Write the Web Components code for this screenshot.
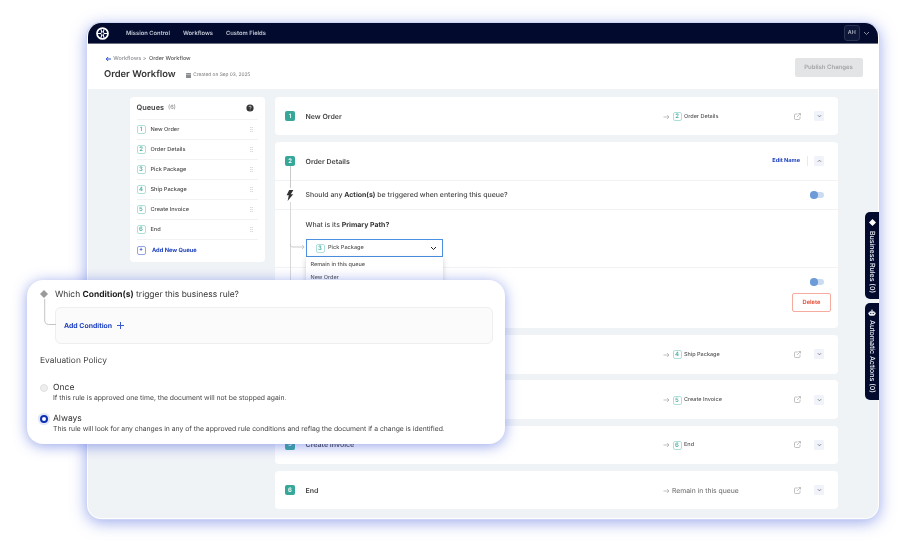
<!DOCTYPE html>
<html>
<head>
<meta charset="utf-8">
<style>
  html, body { margin: 0; background: #fff; }
  body { width: 900px; height: 547px; overflow: hidden; position: relative; font-family: Inter, "Liberation Sans", sans-serif; text-rendering: geometricPrecision; }
  app-window, side-tabs, rule-popup { filter: blur(.25px); will-change: transform; }
</style>
</head>
<body>
<app-window>
  <top-nav></top-nav>
  <page-header></page-header>
  <div slot="side"><queue-list></queue-list></div>
  <queue-card n="1" name="New Order" target="2" target-name="Order Details"></queue-card>
  <details-card></details-card>
  <queue-card n="3" name="Pick Package" target="4" target-name="Ship Package"></queue-card>
  <queue-card n="4" name="Ship Package" target="5" target-name="Create Invoice"></queue-card>
  <queue-card n="5" name="Create Invoice" target="6" target-name="End"></queue-card>
  <queue-card n="6" name="End" target-name="Remain in this queue"></queue-card>
</app-window>
<side-tabs></side-tabs>
<rule-popup></rule-popup>

<script>
const CHEV_DOWN = '<svg width="5" height="4" viewBox="0 0 6 4" fill="none"><path d="M1 1l2 2 2-2" stroke="#666" stroke-width=".9"/></svg>';
const CHEV_UP = '<svg width="5" height="4" viewBox="0 0 6 4" fill="none"><path d="M1 3l2-2 2 2" stroke="#666" stroke-width=".9"/></svg>';

class AppWindow extends HTMLElement {
  constructor() {
    super();
    this.attachShadow({mode: 'open'});
    this.shadowRoot.innerHTML = `
      <style>
        :host { display: flex; flex-direction: column; box-sizing: border-box; width: 792px; height: 496px; margin: 23px 0 0 87px; background: #f0f3f6; border: 1px solid #fff; border-top: 0; border-radius: 14px; overflow: hidden; box-shadow: 0 0 0 1px #cdd6f4, 0 3px 16px rgba(80,105,220,.6); }
        .content { display: flex; gap: 10px; padding: 8px 40px 0 41.5px; }
        .main { display: flex; flex-direction: column; gap: 6.8px; flex: 1; min-width: 0; }
        .side { width: 135px; flex: none; }
      </style>
      <slot name="top"></slot>
      <div class="content">
        <div class="side"><slot name="side"></slot></div>
        <div class="main"><slot></slot></div>
      </div>`;
  }
  connectedCallback() {
    this.querySelector('top-nav').slot = 'top';
    this.querySelector('page-header').slot = 'top';
  }
}

class TopNav extends HTMLElement {
  constructor() {
    super();
    this.attachShadow({mode: 'open'});
    this.shadowRoot.innerHTML = `
      <style>
        :host { display: flex; align-items: center; height: 21.3px; background: #020b2e; border-bottom: .6px solid #6b6f80; box-sizing: border-box; padding: 0 8px 0 7.5px; color: #c3c8d4; font-size: 5.8px; font-weight: 600; }
        .links { display: flex; gap: 13px; margin-left: 17.5px; }
        .user { margin-left: auto; display: flex; align-items: center; gap: 3.5px; }
        .av { width: 15.5px; height: 15.5px; box-sizing: border-box; border: .7px solid #2b3454; background: #0e1738; border-radius: 3px; display: flex; align-items: center; justify-content: center; color: #aab0c0; font-size: 5.4px; }
      </style>
      <svg width="13" height="13" viewBox="0 0 14 14" fill="none" stroke="#fff">
        <circle cx="7" cy="7" r="5.9" stroke-width="1.9"/>
        <circle cx="7" cy="7" r="1.7" stroke-width="1"/>
        <path d="M5.2 2l1 3.4M8.8 2l-1 3.4M5.2 12l1-3.4M8.8 12l-1-3.4M2 7h3.4M8.6 7H12" stroke-width="1.1"/>
      </svg>
      <div class="links"><span>Mission Control</span><span>Workflows</span><span>Custom Fields</span></div>
      <div class="user">
        <div class="av">AH</div>
        <svg width="7" height="5" viewBox="0 0 7 5" fill="none"><path d="M1 1l2.5 2.5L6 1" stroke="#aab0c0" stroke-width=".8"/></svg>
      </div>`;
  }
}

class PageHeader extends HTMLElement {
  constructor() {
    super();
    this.attachShadow({mode: 'open'});
    this.shadowRoot.innerHTML = `
      <style>
        :host { display: flex; align-items: center; justify-content: space-between; height: 44.7px; background: #fff; box-sizing: border-box; padding: 0 15.5px 0 16px; }
        .crumb { display: flex; align-items: center; font-size: 5.5px; color: #8c8f96; gap: 1.2px; font-weight: 500; }
        .crumb b { font-weight: 500; color: #555; margin-left: 1.5px; }
        .row { display: flex; align-items: center; margin-top: 7px; }
        h1 { margin: 0; font-size: 9.4px; font-weight: 600; color: #333; line-height: 12px; }
        .date { display: flex; align-items: center; gap: 2px; margin-left: 10.5px; font-size: 4.8px; color: #777; }
        .btn { width: 68px; height: 19px; background: #e3e4e6; color: #a3a4a7; font-size: 6px; font-weight: 600; border-radius: 2px; display: flex; align-items: center; justify-content: center; margin-top: 2px; }
        .col { margin-top: 4px; }
      </style>
      <div class="col">
        <div class="crumb">
          <svg width="7" height="6" viewBox="0 0 7 6" fill="none" style="margin-left:1px"><path d="M6 3H1.2M3.2 1L1.2 3l2 2" stroke="#2c4fc7" stroke-width="1"/></svg>
          <span>Workflows &gt;</span><b>Order Workflow</b>
        </div>
        <div class="row">
          <h1>Order Workflow</h1>
          <div class="date">
            <svg width="5" height="5" viewBox="0 0 5 5"><rect width="5" height="5" rx=".5" fill="#8a8c90"/><path d="M0 1.6h5" stroke="#fff" stroke-width=".4"/></svg>
            <span>Created on Sep 03, 2025</span>
          </div>
        </div>
      </div>
      <div class="btn">Publish Changes</div>`;
  }
}

class QueueBadge extends HTMLElement {
  static get observedAttributes() { return ['n']; }
  constructor() {
    super();
    this.attachShadow({mode: 'open'});
    this.shadowRoot.innerHTML = `
      <style>
        :host { display: inline-flex; align-items: center; justify-content: center; box-sizing: border-box; width: 9px; height: 9px; flex: none; border: 1px solid #aee0d9; border-radius: 2px; color: #4bb0a4; font-size: 6px; font-weight: 600; background: #fff; }
        :host([solid]) { width: 10px; height: 10.5px; background: #37a79a; border-color: #37a79a; color: #fff; border-radius: 1.5px; }
      </style>
      <span></span>`;
  }
  attributeChangedCallback(k, o, v) { this.shadowRoot.querySelector('span').textContent = v; }
}

class QueueList extends HTMLElement {
  constructor() {
    super();
    this.attachShadow({mode: 'open'});
    const names = ['New Order', 'Order Details', 'Pick Package', 'Ship Package', 'Create Invoice', 'End'];
    const rows = names.map((t, i) => `
      <div class="row"><queue-badge n="${i + 1}"></queue-badge><span>${t}</span>
        <svg class="grip" width="3" height="5" viewBox="0 0 3 5" fill="#c4c4c4"><rect x=".3" width=".9" height=".9"/><rect x="1.8" width=".9" height=".9"/><rect x=".3" y="2" width=".9" height=".9"/><rect x="1.8" y="2" width=".9" height=".9"/><rect x=".3" y="4" width=".9" height=".9"/><rect x="1.8" y="4" width=".9" height=".9"/></svg>
      </div>`).join('');
    this.shadowRoot.innerHTML = `
      <style>
        :host { display: block; background: #fff; border-radius: 4px; box-sizing: border-box; height: 165px; padding: 0 7px; }
        .head { display: flex; align-items: center; height: 21.8px; font-size: 7.4px; font-weight: 600; color: #444; }
        .head small { font-size: 5.7px; font-weight: 400; color: #777; margin-left: 4px; }
        .head svg { margin-left: auto; margin-right: 3.5px; }
        .row { display: flex; align-items: center; height: 20.05px; box-sizing: border-box; border-top: .6px solid #f1f2f4; padding-top: .6px; font-size: 5.6px; font-weight: 500; color: #4a4a4a; }
        .row span { margin-left: 5px; }
        .grip { margin-left: auto; margin-right: 5px; }
        .add { display: flex; align-items: center; height: 21px; border-top: .6px solid #f1f2f4; padding-top: .6px; box-sizing: border-box; color: #1c3fbe; font-size: 5.7px; font-weight: 700; }
        .add i { box-sizing: border-box; width: 9px; height: 9px; border: 1px solid #93a4e4; border-radius: 2px; margin-right: 6.5px; display: flex; align-items: center; justify-content: center; font-style: normal; font-size: 6px; line-height: 1; }
      </style>
      <div class="head">Queues <small>(6)</small>
        <svg width="8" height="8" viewBox="0 0 8 8"><circle cx="4" cy="4" r="3.6" fill="#333"/><path d="M2.9 3.1c0-1.4 2.3-1.4 2.3 0 0 .8-1.1.8-1.1 1.6" fill="none" stroke="#fff" stroke-width=".7"/><circle cx="4.1" cy="5.9" r=".45" fill="#fff"/></svg>
      </div>
      ${rows}
      <div class="add"><i>+</i>Add New Queue</div>`;
  }
}

class QueueCard extends HTMLElement {
  constructor() {
    super();
    this.attachShadow({mode: 'open'});
  }
  connectedCallback() {
    const n = this.getAttribute('n'), target = this.getAttribute('target');
    const name = this.getAttribute('name'), tn = this.getAttribute('target-name');
    this.shadowRoot.innerHTML = `
      <style>
        :host { display: flex; align-items: center; height: 38.5px; background: #fff; border-radius: 4px; box-sizing: border-box; padding: 0 14px 0 10.5px; flex: none; }
        .name { margin-left: 10.5px; font-size: 7px; font-weight: 600; color: #444; }
        .to { margin-left: auto; display: flex; align-items: center; width: 131px; padding-top: .8px; font-size: 5.5px; font-weight: 500; color: #555; gap: 2.5px; }
        .to.plain { font-size: 6.8px; font-weight: 400; color: #666; gap: 2px; }
        .ext { margin-right: 13px; }
        .chev { width: 10px; height: 10px; background: #f1f3fb; border-radius: 1.5px; display: flex; align-items: center; justify-content: center; }
      </style>
      <queue-badge n="${n}" solid></queue-badge>
      <span class="name">${name}</span>
      <div class="to ${target ? '' : 'plain'}">
        <svg width="7" height="6" viewBox="0 0 7 6" fill="none"><path d="M.5 3H6M4 1l2 2-2 2" stroke="#a8a8a8" stroke-width=".7"/></svg>
        ${target ? `<queue-badge n="${target}"></queue-badge>` : ''}<span>${tn}</span>
      </div>
      <svg class="ext" width="7" height="7" viewBox="0 0 7 7" fill="none" stroke="#a8a8a8" stroke-width=".7"><path d="M3.6 1H1.4C.9 1 .5 1.4.5 1.9v3.7c0 .5.4.9.9.9h3.7c.5 0 .9-.4.9-.9V3.6"/><path d="M3 4l3.3-3.4M4.4.5h2.1v2.1"/></svg>
      <div class="chev">${CHEV_DOWN}</div>`;
  }
}

class ToggleSwitch extends HTMLElement {
  constructor() {
    super();
    this.attachShadow({mode: 'open'});
    this.shadowRoot.innerHTML = `
      <style>
        :host { display: flex; align-items: center; width: 14px; height: 6px; border-radius: 3px; background: #c9dcf2; flex: none; }
        i { width: 7.6px; height: 7.6px; border-radius: 50%; background: #6c9bd8; flex: none; }
      </style>
      <i></i>`;
  }
}

class DetailsCard extends HTMLElement {
  constructor() {
    super();
    this.attachShadow({mode: 'open'});
    this.shadowRoot.innerHTML = `
      <style>
        :host { display: block; position: relative; height: 186px; background: #fff; border-radius: 4px; flex: none; color: #444; font-size: 6.95px; font-weight: 500; }
        b { font-weight: 700; color: #333; }
        .head, .ask, .path { box-sizing: border-box; border-bottom: .7px solid #f1f2f4; }
        .head { display: flex; align-items: center; height: 38.5px; padding: 0 14px 0 10.5px; }
        .name { margin-left: 10.5px; font-weight: 600; font-size: 7px; }
        .edit { margin-left: auto; color: #1c3fbe; font-size: 5.6px; font-weight: 700; padding-right: 6.5px; border-right: .7px solid #e8e9ec; line-height: 10px; margin-right: 6.5px; }
        .chev { width: 10px; height: 10px; background: #f1f3fb; border-radius: 1.5px; display: flex; align-items: center; justify-content: center; }
        .ask { display: flex; align-items: center; justify-content: space-between; height: 29px; padding: 0 14px 0 31px; }
        .path { height: 58px; padding: 10.5px 0 0 31px; }
        .select { display: flex; align-items: center; box-sizing: border-box; width: 137px; height: 18.5px; margin-top: 9.5px; border: 1px solid #4b90e2; padding: 0 5px 0 9px; font-size: 5.6px; color: #555; gap: 3.5px; position: relative; background: #fff; }
        .select svg { margin-left: auto; }
        .menu { position: absolute; left: 31px; top: 114.5px; width: 137px; box-sizing: border-box; background: #fff; box-shadow: 0 2px 5px rgba(60,60,80,.25); padding: 2.5px 5px; font-size: 5.5px; font-weight: 500; color: #555; height: 40px; }
        .menu div { height: 13px; line-height: 13px; }
        .foot { display: flex; justify-content: flex-end; padding: 0 7px 0 0; margin-top: -4px; }
        .del { width: 39px; height: 19px; box-sizing: border-box; border: 1px solid #f6aba0; border-radius: 2px; color: #e8553f; font-size: 5.7px; font-weight: 700; display: flex; align-items: center; justify-content: center; }
        .line { position: absolute; left: 15px; width: .8px; background: #c9c9c9; }
        .bolt { position: absolute; left: 11.5px; top: 47.5px; }
        .hook { position: absolute; left: 15px; top: 102px; }
      </style>
      <div class="line" style="top:24px;height:22px"></div>
      <div class="line" style="top:60px;height:100px;background:#d8d8d8"></div>
      <svg class="bolt" width="8" height="11" viewBox="0 0 8 11"><path d="M3.2 0L.6 5.3h2.2L1.6 11l5.6-6.8H4.8L7.4 0z" fill="#333"/></svg>
      <svg class="hook" width="16" height="6" viewBox="0 0 16 6" fill="none" stroke="#b5b5b5" stroke-width=".7"><path d="M0 0c0 2 1 3 3 3h11M12 1l2.2 2L12 5"/></svg>
      <div class="head">
        <queue-badge n="2" solid></queue-badge>
        <span class="name">Order Details</span>
        <span class="edit">Edit Name</span>
        <div class="chev">${CHEV_UP}</div>
      </div>
      <div class="ask"><span>Should any <b>Action(s)</b> be triggered when entering this queue?</span><toggle-switch></toggle-switch></div>
      <div class="path">
        <div>What is its <b>Primary Path?</b></div>
        <div class="select"><queue-badge n="3"></queue-badge>Pick Package
          <svg width="7" height="5" viewBox="0 0 7 5" fill="none"><path d="M1 1l2.5 2.5L6 1" stroke="#222" stroke-width="1"/></svg>
        </div>
      </div>
      <div class="menu"><div>Remain in this queue</div><div>New Order</div></div>
      <div class="ask" style="border:0"><span></span><toggle-switch></toggle-switch></div>
      <div class="foot"><div class="del">Delete</div></div>`;
  }
}

class SideTabs extends HTMLElement {
  constructor() {
    super();
    this.attachShadow({mode: 'open'});
    this.shadowRoot.innerHTML = `
      <style>
        :host { position: absolute; left: 865px; top: 212px; width: 14px; display: flex; flex-direction: column; gap: 4px; color: #eef0f5; font-size: 7px; font-weight: 500; }
        .tab { background: #020b2e; border-radius: 5px 0 0 5px; display: flex; flex-direction: column; align-items: center; padding-top: 6.5px; box-sizing: border-box; gap: 5px; }
        span { writing-mode: vertical-rl; white-space: nowrap; }
      </style>
      <div class="tab" style="height:87px">
        <svg width="7" height="7" viewBox="0 0 7 7"><path d="M3.5 0L7 3.5 3.5 7 0 3.5z" fill="#fff"/></svg>
        <span>Business Rules (0)</span>
      </div>
      <div class="tab" style="height:97px;gap:3px;padding-top:6px">
        <svg width="8" height="8" viewBox="0 0 8 8" fill="#eef0f5"><rect x="1" y="2.2" width="6" height="4.6" rx="1.6"/><rect x=".1" y="3.6" width=".7" height="1.6"/><rect x="7.2" y="3.6" width=".7" height="1.6"/><circle cx="4" cy="1.2" r=".8"/><circle cx="2.8" cy="4.4" r=".6" fill="#020b2e"/><circle cx="5.2" cy="4.4" r=".6" fill="#020b2e"/></svg>
        <span>Automatic Actions (0)</span>
      </div>`;
  }
}

class RulePopup extends HTMLElement {
  constructor() {
    super();
    this.attachShadow({mode: 'open'});
    this.shadowRoot.innerHTML = `
      <style>
        :host { position: absolute; z-index: 2; left: 27px; top: 280px; width: 478px; height: 164px; box-sizing: border-box; background: #fff; border-radius: 16px; box-shadow: 0 2px 14px rgba(80,105,220,.6); padding: 8px 12px 0 13px; color: #333; }
        .q { display: flex; align-items: center; height: 14px; font-size: 8.45px; padding-left: 15px; position: relative; }
        .q b { font-weight: 700; color: #222; }
        .dia { position: absolute; left: 0; top: 2px; }
        .hook { position: absolute; left: 3.5px; top: 11px; }
        .box { display: flex; align-items: center; gap: 5px; box-sizing: border-box; margin: 5px 0 0 15px; height: 36.5px; background: #fbfbfb; border: .7px solid #eeeeef; border-radius: 6px; padding-left: 8px; color: #1c3fbe; font-size: 6.9px; font-weight: 700; }
        .box svg path { stroke: #3a5bd0; }
        .h { margin-top: 12.5px; font-size: 8.4px; line-height: 11px; color: #444; }
        .opt { display: flex; position: relative; padding-left: 13px; font-size: 8.5px; line-height: 10px; color: #333; }
        .opt small { display: block; font-size: 6.8px; line-height: 9.5px; color: #444; }
        .r { position: absolute; left: 0; top: 1px; width: 8px; height: 8px; box-sizing: border-box; border-radius: 50%; background: #eee; border: .7px solid #e0e0e0; }
        .r.on { background: #fff; border: 2.2px solid #0c2fb5; box-shadow: 0 0 0 2.2px #e3e8f8; }
      </style>
      <div class="q">
        <svg class="dia" width="8" height="8" viewBox="0 0 8 8"><path d="M4 0l4 4-4 4-4-4z" fill="#9a9a9a"/></svg>
        <svg class="hook" width="12" height="30" viewBox="0 0 12 30" fill="none"><path d="M.7 0v21c0 3 1.5 4.5 4 4.5H12" stroke="#c4c4c4" stroke-width="1"/></svg>
        <span>Which <b>Condition(s)</b> trigger this business rule?</span>
      </div>
      <div class="box"><span>Add Condition</span>
        <svg width="7" height="7" viewBox="0 0 7 7"><path d="M3.5 0v7M0 3.5h7" stroke-width="1"/></svg>
      </div>
      <div class="h">Evaluation Policy</div>
      <div class="opt" style="margin-top:15.5px"><i class="r"></i><div>Once<small>If this rule is approved one time, the document will not be stopped again.</small></div></div>
      <div class="opt" style="margin-top:11.5px"><i class="r on"></i><div>Always<small>This rule will look for any changes in any of the approved rule conditions and reflag the document if a change is identified.</small></div></div>`;
  }
}

customElements.define('queue-badge', QueueBadge);
customElements.define('toggle-switch', ToggleSwitch);
customElements.define('top-nav', TopNav);
customElements.define('page-header', PageHeader);
customElements.define('queue-list', QueueList);
customElements.define('queue-card', QueueCard);
customElements.define('details-card', DetailsCard);
customElements.define('side-tabs', SideTabs);
customElements.define('rule-popup', RulePopup);
customElements.define('app-window', AppWindow);
</script>
</body>
</html>
